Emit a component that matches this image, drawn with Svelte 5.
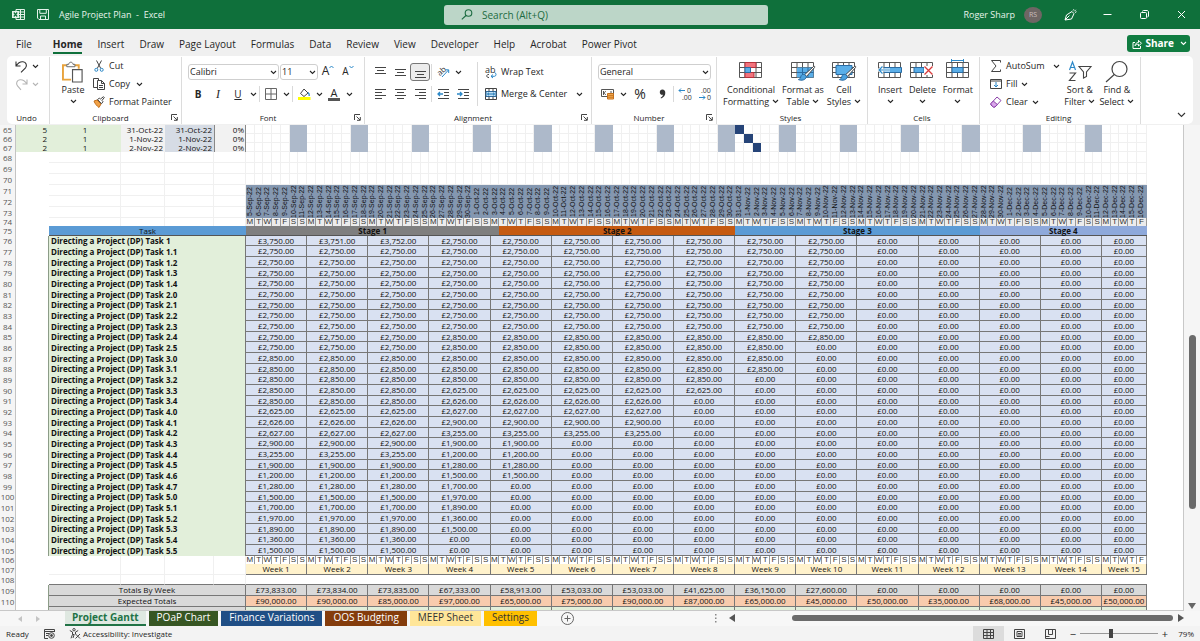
<script>
  const menu = ['File', 'Home', 'Insert', 'Draw', 'Page Layout', 'Formulas', 'Data', 'Review', 'View', 'Developer', 'Help', 'Acrobat', 'Power Pivot']

  const sheets = [
    { name: 'Project Gantt', cls: 'active' },
    { name: 'POaP Chart', cls: 'green' },
    { name: 'Finance Variations', cls: 'blue' },
    { name: 'OOS Budgting', cls: 'brown' },
    { name: 'MEEP Sheet', cls: 'cream' },
    { name: 'Settings', cls: 'gold' }
  ]

  // one column per day, 5 Sep to 16 Dec
  const start = Date.UTC(2022, 8, 5)
  const months = ['Jan', 'Feb', 'Mar', 'Apr', 'May', 'Jun', 'Jul', 'Aug', 'Sep', 'Oct', 'Nov', 'Dec']
  const days = Array.from({ length: 103 }, (_, i) => {
    const d = new Date(start + i * 86400000)
    return {
      label: `${d.getUTCDate()}-${months[d.getUTCMonth()]}-22`,
      letter: 'MTWTFSS'[i % 7],
      weekend: i % 7 > 4
    }
  })

  const weeks = Array.from({ length: 15 }, (_, i) => i + 1)
  const span = (i) => (i === 14 ? 5 : 7)

  const stages = [
    { name: 'Stage 1', days: 29, cls: 's1' },
    { name: 'Stage 2', days: 27, cls: 's2' },
    { name: 'Stage 3', days: 28, cls: 's3' },
    { name: 'Stage 4', days: 19, cls: 's4' }
  ]

  const top = [
    { row: 65, a: 5, b: 1, date: '31-Oct-22', on: 56 },
    { row: 66, a: 2, b: 1, date: '1-Nov-22', on: 57 },
    { row: 67, a: 2, b: 1, date: '2-Nov-22', on: 58 }
  ]

  // task, cost in weeks 1-3, cost from week 4, how many weeks from week 4
  const tasks = [
    ['1', 2750, 2750, 7],
    ['1.1', 2750, 2750, 7],
    ['1.2', 2750, 2750, 7],
    ['1.3', 2750, 2750, 7],
    ['1.4', 2750, 2750, 7],
    ['2.0', 2750, 2750, 7],
    ['2.1', 2750, 2750, 7],
    ['2.2', 2750, 2750, 7],
    ['2.3', 2750, 2750, 7],
    ['2.4', 2750, 2850, 7],
    ['2.5', 2750, 2850, 6],
    ['3.0', 2850, 2850, 6],
    ['3.1', 2850, 2850, 6],
    ['3.2', 2850, 2850, 5],
    ['3.3', 2850, 2625, 5],
    ['3.4', 2850, 2626, 4],
    ['4.0', 2625, 2627, 4],
    ['4.1', 2626, 2900, 4],
    ['4.2', 2627, 3255, 4],
    ['4.3', 2900, 1900, 2],
    ['4.4', 3255, 1200, 2],
    ['4.5', 1900, 1280, 2],
    ['4.6', 1200, 1500, 2],
    ['4.7', 1280, 1700, 1],
    ['5.0', 1500, 1970, 1],
    ['5.1', 1700, 1890, 1],
    ['5.2', 1970, 1360, 1],
    ['5.3', 1890, 1500, 1],
    ['5.4', 1360, 0, 0],
    ['5.5', 1500, 0, 0]
  ].map(([name, early, late, n], r) => ({
    row: 76 + r,
    name: `Directing a Project (DP) Task ${name}`,
    costs: weeks.map((w) => {
      if (r === 0 && w <= 3) return 3749 + w
      if (w <= 3) return early
      return w <= 3 + n ? late : 0
    })
  }))

  const totals = [73833, 73834, 73835, 67333, 58913, 53033, 53033, 41625, 36150, 27600, 0, 0, 0, 0, 0]
  const expected = [90000, 90000, 85000, 97000, 65000, 75000, 90000, 87000, 65000, 45000, 50000, 35000, 68000, 45000, 50000]
  const resources = [4, 5, 5, 4, 5, 4, 4, 5, 4, 4, '', '', '', '', '']

  const money = (n) => '£' + n.toLocaleString('en-GB', { minimumFractionDigits: 2 })

  let search = ''
  let zoom = 79
</script>

{#snippet chev()}
  <svg class="chev" width="7" height="5" viewBox="0 0 7 5"><path d="M1 1l2.5 2.4L6 1" fill="none" stroke="currentColor" stroke-width="1.1" /></svg>
{/snippet}

{#snippet lines(rows)}
  <svg width="13" height="13" viewBox="0 0 13 13" stroke="#444" stroke-width="1">
    {#each rows as [x1, x2, y]}<path d="M{x1} {y}H{x2}" />{/each}
  </svg>
{/snippet}

{#snippet launcher()}
  <button class="launch" aria-label="More options">
    <svg width="7" height="7" viewBox="0 0 7 7" fill="none" stroke="#444"><path d="M.5 6V.5H6M2.5 2.5l3.5 3.5M6.3 3v3.3H3" /></svg>
  </button>
{/snippet}

{#snippet gridIcon()}
  <path d="M.5 1.5h22v15H.5zM.5 6.5h22M.5 11.5h22M6 1.5v15M11.5 1.5v15M17 1.5v15" fill="#fff" stroke="#555" />
{/snippet}

{#snippet brush()}
  <path d="M22.5 5.500l-8.700 8 1.700 1.900 8-8.800c.8-.9-.2-1.800-1-1.100z" fill="#fff" stroke="#444" />
  <path d="M13.700 13.600c-2.200-.8-3.700.4-4 2.400-.2 1.500-1 2.200-2.300 2.600 3 1.300 7.300.6 8-2.900z" fill="#4da3e0" stroke="#2b6ca3" />
{/snippet}

{#snippet leftBlank()}
  <td class="grid"></td><td class="grid"></td><td class="grid"></td><td class="grid"></td>
{/snippet}

<div class="app">
  <header class="titlebar">
    <div class="doc">
      <svg width="13" height="11" viewBox="0 0 13 11"><path d="M4 .5h8.500v10H4zM4 3h8.500M4 5.500h8.500M4 8h8.500M8.500.5v10" fill="none" stroke="#e4f3ea" /><path d="M0 2h7v7H0z" fill="#e4f3ea" /><path d="M1.800 3.500l3.400 4M5.200 3.500l-3.400 4" stroke="#0f703b" stroke-width="1.200" /></svg>
      <svg width="12" height="11" viewBox="0 0 12 11" fill="none" stroke="#e4f3ea"><path d="M.5.5h11v10H2L.5 9zM2.800.5v3.800h6.500V.5M3.500 10.500V7h5v3.500" /></svg>
      <span>Agile Project Plan&nbsp; -&nbsp; Excel</span>
    </div>
    <label class="search">
      <svg width="12" height="11" viewBox="0 0 12 11" fill="none" stroke="#1c6b41" stroke-width="1.100"><circle cx="7.500" cy="4" r="3.300" /><path d="M5 6.500L.8 10.300" /></svg>
      <input type="text" placeholder="Search (Alt+Q)" aria-label="Search" bind:value={search} />
    </label>
    <div class="user">
      <span>Roger Sharp</span>
      <span class="avatar">RS</span>
      <button class="win" aria-label="Draw"><svg width="13" height="12" viewBox="0 0 13 12" fill="none" stroke="#fff"><path d="M1 11l1.500-5L8 2.500l2 2.200L7.500 10 1 11l4.500-4.500M9 1.500l.8-1.200M11 3.500l1.500-.8M10.300 2.300l1.500-1.500" /></svg></button>
      <button class="win" aria-label="Minimise"><svg width="9" height="9" viewBox="0 0 9 9"><path d="M.5 4.500h8" stroke="#fff" /></svg></button>
      <button class="win" aria-label="Restore"><svg width="9" height="9" viewBox="0 0 9 9" fill="none" stroke="#fff"><rect x=".5" y="2.500" width="6" height="6" rx="1" /><path d="M2.500 1.500c0-.6.400-1 1-1H7c.8 0 1.500.6 1.500 1.500V6c0 .5-.4 1-1 1" /></svg></button>
      <button class="win" aria-label="Close"><svg width="9" height="9" viewBox="0 0 9 9"><path d="M1 1l7 7M8 1L1 8" stroke="#fff" /></svg></button>
    </div>
  </header>

  <nav class="menu">
    {#each menu as item}
      <button class:current={item === 'Home'}>{item}</button>
    {/each}
    <button class="share">
      <svg width="10" height="10" viewBox="0 0 10 10" fill="none" stroke="#fff"><path d="M3 3.500H1v6h7.500V7M3 6.800c.3-2.300 1.700-3.300 3.500-3.300V1.300l3 3-3 2.700V5.200C5 5.200 4 5.600 3 6.800z" /></svg>
      Share {@render chev()}
    </button>
  </nav>

  <div class="ribbon">
    <section class="group undo">
      <div class="body col">
        <button class="small" aria-label="Undo"><svg width="13" height="13" viewBox="0 0 13 13" fill="none" stroke="#333" stroke-width="1.100"><path d="M1 1.500V6h4.500M1.200 5.800C3 3 5.500 1.500 8 1.800c3 .4 4.500 3.700 2.500 6L6 12.300" /></svg>{@render chev()}</button>
        <button class="small off" aria-label="Redo"><svg width="13" height="13" viewBox="0 0 13 13" fill="none" stroke="currentColor" stroke-width="1.100"><path d="M12 1.500V6H7.500M11.800 5.800C10 3 7.500 1.500 5 1.800 2 2.200.5 5.500 2.500 7.800l3.500 4" /></svg>{@render chev()}</button>
      </div>
      <footer><span>Undo</span></footer>
    </section>

    <section class="group clipboard">
      <div class="body">
        <button class="big">
          <svg width="24" height="22" viewBox="0 0 24 23" fill="none"><path d="M10 19.500H1.500V4.500h4M14 4.500h4V8" stroke="#e8a33d" stroke-width="2" /><path d="M5.500 6V3.500h2c.3-3 4.200-3 4.500 0h2V6z" stroke="#666" fill="#fff" /><path d="M11.500 9h10v13h-10z" stroke="#555" fill="#fff" stroke-width="1.200" /></svg>
          <span>Paste</span>{@render chev()}
        </button>
        <div class="col">
          <button class="small"><svg width="12" height="12" viewBox="0 0 12 12" fill="none"><path d="M3.500.5l4.300 8M8.500.5l-4.300 8" stroke="#444" /><circle cx="3.300" cy="9.800" r="1.500" stroke="#2b88c8" /><circle cx="8.700" cy="9.800" r="1.500" stroke="#2b88c8" /></svg>Cut</button>
          <button class="small"><svg width="12" height="12" viewBox="0 0 12 12" fill="#fff" stroke="#444"><path d="M4 9.500H.5v-9h5V2" /><path d="M4.500 2.500h4l3 3v6h-7zM8.500 2.500v3h3M6 7.500h4M6 9.500h4" /></svg>Copy&nbsp; {@render chev()}</button>
          <button class="small"><svg width="12" height="12" viewBox="0 0 12 12"><path d="M1 5l3-1 4 4-2 3.500C4 10 2 8 1 5z" fill="#f0a146" stroke="#c5701c" /><path d="M4.500 3.500l1.800-1.300L7.500 3 10.500.7l.8.8L9 4.500l1 1.200-1.500 2z" fill="#fff" stroke="#444" /></svg>Format Painter</button>
        </div>
      </div>
      <footer><span>Clipboard</span>{@render launcher()}</footer>
    </section>

    <section class="group font">
      <div class="body two">
        <div class="line">
          <label class="pick name"><select aria-label="Font"><option>Calibri</option></select>{@render chev()}</label>
          <label class="pick size"><select aria-label="Font size"><option>11</option></select>{@render chev()}</label>
          <button class="cell grow" aria-label="Increase font size"><span>A</span><svg width="5" height="4" viewBox="0 0 5 4"><path d="M.5 3l2-2 2 2" fill="none" stroke="#2b88c8" /></svg></button>
          <button class="cell grow shrink" aria-label="Decrease font size"><span>A</span><svg width="5" height="4" viewBox="0 0 5 4"><path d="M.5 1l2 2 2-2" fill="none" stroke="#2b88c8" /></svg></button>
        </div>
        <div class="line">
          <button class="cell"><b>B</b></button>
          <button class="cell"><i>I</i></button>
          <button class="cell"><u>U</u></button>
          <button class="drop" aria-label="Underline style">{@render chev()}</button>
          <span class="sep"></span>
          <button class="cell" aria-label="Borders"><svg width="12" height="12" viewBox="0 0 12 12" fill="none" stroke="#666"><path d="M.5.5h11v11H.5zM6 .5v11M.5 6h11" /></svg></button>
          <button class="drop" aria-label="Border style">{@render chev()}</button>
          <span class="sep"></span>
          <button class="cell" aria-label="Fill colour"><svg width="13" height="12" viewBox="0 0 13 12"><path d="M6 1l4 4-4 3.500L2.500 5.500z" fill="#fff" stroke="#444" /><path d="M10 4.500c1 .8 1.500 1.800 1.200 3.500" fill="none" stroke="#2b88c8" stroke-width="1.300" /><path d="M0 9h12.500v3H0z" fill="#ff0" /></svg></button>
          <button class="drop" aria-label="Fill options">{@render chev()}</button>
          <button class="cell acolor"><span>A</span></button>
          <button class="drop" aria-label="Font colour options">{@render chev()}</button>
        </div>
      </div>
      <footer><span>Font</span>{@render launcher()}</footer>
    </section>

    <section class="group align">
      <div class="body">
        <div class="two">
          <div class="line">
            <button class="cell" aria-label="Top align">{@render lines([[1, 12, 1.5], [3, 10, 4.5], [1, 12, 7.5]])}</button>
            <button class="cell" aria-label="Middle align">{@render lines([[1, 12, 3.5], [3, 10, 6.5], [1, 12, 9.5]])}</button>
            <button class="cell pressed" aria-label="Bottom align">{@render lines([[1, 12, 5.5], [3, 10, 8.5], [1, 12, 11.5]])}</button>
            <span class="sep"></span>
            <button class="cell" aria-label="Orientation"><svg width="14" height="12" viewBox="0 0 14 12"><text x="1" y="9" transform="rotate(-40 4 6)" font-size="8" font-family="Open Sans" fill="#333">ab</text><path d="M6 11l6.500-7M12.700 7V3.800H9.500" stroke="#2b88c8" fill="none" /></svg></button>
            <button class="drop" aria-label="Orientation options">{@render chev()}</button>
          </div>
          <div class="line">
            <button class="cell" aria-label="Align left">{@render lines([[1, 12, 1.5], [1, 8, 4.5], [1, 12, 7.5], [1, 8, 10.5]])}</button>
            <button class="cell" aria-label="Centre">{@render lines([[1, 12, 1.5], [3, 10, 4.5], [1, 12, 7.5], [3, 10, 10.5]])}</button>
            <button class="cell" aria-label="Align right">{@render lines([[1, 12, 1.5], [5, 12, 4.5], [1, 12, 7.5], [5, 12, 10.5]])}</button>
            <span class="sep"></span>
            <button class="cell" aria-label="Decrease indent"><svg width="13" height="12" viewBox="0 0 13 12"><path d="M1 1.500h11M7 4.500h5M7 7.500h5M1 10.500h11" stroke="#444" /><path d="M6 6H1M3 4L1 6l2 2" stroke="#2b88c8" fill="none" stroke-width="1.300" /></svg></button>
            <button class="cell" aria-label="Increase indent"><svg width="13" height="12" viewBox="0 0 13 12"><path d="M1 1.500h11M7 4.500h5M7 7.500h5M1 10.500h11" stroke="#444" /><path d="M0 6h5M3 4l2 2-2 2" stroke="#2b88c8" fill="none" stroke-width="1.300" /></svg></button>
          </div>
        </div>
        <span class="sep tall"></span>
        <div class="two">
          <button class="small"><svg width="12" height="13" viewBox="0 0 12 13"><text x="0" y="7" font-size="9" font-family="Open Sans" fill="#333">ab</text><path d="M9.500 6.500c2 .3 2 3.800 0 3.800H6M8 8.500l-2 1.800L8 12" stroke="#2b88c8" fill="none" /><path d="M4 8.500c-3-.5-3 3.300 0 3" stroke="#444" fill="none" /></svg>Wrap Text</button>
          <button class="small"><svg width="12" height="12" viewBox="0 0 12 12"><path d="M.5.5h11v11H.5z" fill="#fff" stroke="#444" /><path d="M1 3.500h10v5H1z" fill="#bfe0f5" stroke="#2b6ca3" /><path d="M4 .5v3M8 .5v3M4 8.500v3M8 8.500v3" stroke="#444" /><path d="M2.500 6h7M4 4.700L2.500 6 4 7.300M8 4.700L9.500 6 8 7.300" stroke="#1f78b8" fill="none" /></svg>Merge &amp; Center&nbsp;&nbsp; {@render chev()}</button>
        </div>
      </div>
      <footer><span>Alignment</span>{@render launcher()}</footer>
    </section>

    <section class="group number">
      <div class="body two">
        <label class="pick wide"><select aria-label="Number format"><option>General</option></select>{@render chev()}</label>
        <div class="line">
          <button class="cell" aria-label="Accounting format"><svg width="14" height="12" viewBox="0 0 14 12"><path d="M.5 1.500h12v7H.5z" fill="#fff" stroke="#555" /><path d="M5 3.500c-2-.5-2 3.500 0 3M2.500 3v4M10 3v2" stroke="#555" fill="none" /><path d="M6.500 5.500h6v5.500h-6z" fill="#f7b45a" stroke="#c5701c" /><path d="M6.500 7.300h6M6.500 9.200h6" stroke="#c5701c" /></svg></button>
          <button class="drop" aria-label="Accounting options">{@render chev()}</button>
          <button class="cell pct">%</button>
          <button class="cell" aria-label="Comma style"><svg width="7" height="10" viewBox="0 0 7 10"><path d="M3.300.5C5.300.5 6.300 2 6.300 4c0 2.500-1.500 4.500-4.300 5.500l-.4-.8C3.200 7.800 3.900 6.700 3.900 5.700 2 6.200.8 4.800.8 3.200.8 1.500 2 .5 3.300.5z" fill="#333" /></svg></button>
          <span class="sep"></span>
          <button class="cell" aria-label="Increase decimal"><svg width="14" height="14" viewBox="0 0 14 14" font-size="7" font-family="Open Sans" fill="#333"><text x="9" y="6">0</text><text x="4" y="13">.00</text><path d="M7 3.500H1M3 1.500l-2 2 2 2" stroke="#2b88c8" fill="none" /></svg></button>
          <button class="cell" aria-label="Decrease decimal"><svg width="14" height="14" viewBox="0 0 14 14" font-size="7" font-family="Open Sans" fill="#333"><text x="3" y="6">.00</text><text x="9" y="13">0</text><path d="M1 10.500h6M5 8.500l2 2-2 2" stroke="#2b88c8" fill="none" /></svg></button>
        </div>
      </div>
      <footer><span>Number</span>{@render launcher()}</footer>
    </section>

    <section class="group styles">
      <div class="body">
        <button class="big">
          <svg width="24" height="22" viewBox="0 0 24 22">{@render gridIcon()}<path d="M6 1.500h11v5H6zM6 11.500h9v5H6z" fill="#f2737d" stroke="#b5323c" /><path d="M6 6.500h5.500v5H6z" fill="#5aaee8" stroke="#2b6ca3" /></svg>
          <span>Conditional</span><span>Formatting {@render chev()}</span>
        </button>
        <button class="big">
          <svg width="24" height="22" viewBox="0 0 24 22">{@render gridIcon()}<path d="M6 6.500h16.500v10H6z" fill="#5aaee8" /><path d="M6 11.500h16.500M11.500 6.500v10M17 6.500v10" stroke="#2b6ca3" />{@render brush()}</svg>
          <span>Format as</span><span>Table {@render chev()}</span>
        </button>
        <button class="big">
          <svg width="24" height="22" viewBox="0 0 24 22">{@render gridIcon()}<path d="M4 4.500h16v9H4z" fill="#5aaee8" stroke="#2b6ca3" />{@render brush()}</svg>
          <span>Cell</span><span>Styles {@render chev()}</span>
        </button>
      </div>
      <footer><span>Styles</span></footer>
    </section>

    <section class="group cells">
      <div class="body">
        <button class="big">
          <svg width="24" height="22" viewBox="0 0 24 22">{@render gridIcon()}<path d="M6 6.500h17.500v5H6z" fill="#5aaee8" stroke="#2b6ca3" /><path d="M12 9H1M4.500 5.500L1 9l3.500 3.500" stroke="#fff" stroke-width="3" fill="none" /><path d="M12 9H1M4.500 5.500L1 9l3.500 3.500" stroke="#2b88c8" fill="none" stroke-width="1.200" /></svg>
          <span>Insert</span>{@render chev()}
        </button>
        <button class="big">
          <svg width="24" height="22" viewBox="0 0 24 22">{@render gridIcon()}<path d="M4 6.500h10v5H4z" fill="#5aaee8" stroke="#2b6ca3" /><path d="M14 5h9v9h-9z" fill="#fff" /><path d="M14.500 5.500l8 8M22.500 5.500l-8 8" stroke="#d83b3b" stroke-width="1.300" /></svg>
          <span>Delete</span>{@render chev()}
        </button>
        <button class="big">
          <svg width="24" height="22" viewBox="0 0 24 22">{@render gridIcon()}<path d="M6 6.500h11v5H6z" fill="#5aaee8" stroke="#2b6ca3" /><path d="M5-.5h13M5.500-2v3M17.500-2v3" stroke="#2b88c8" /></svg>
          <span>Format</span>{@render chev()}
        </button>
      </div>
      <footer><span>Cells</span></footer>
    </section>

    <section class="group editing">
      <div class="body">
        <div class="col">
          <button class="small"><svg width="12" height="12" viewBox="0 0 12 12" fill="none" stroke="#444"><path d="M10.500 2.500v-2h-9L6 6l-4.500 5.500h9v-2" /></svg>AutoSum&nbsp;&nbsp; {@render chev()}</button>
          <button class="small"><svg width="12" height="12" viewBox="0 0 12 12" fill="none"><path d="M.5 1.500h11v9H.5zM.5 3h11" stroke="#444" /><path d="M6 4v5M4 7l2 2 2-2" stroke="#2b88c8" /></svg>Fill {@render chev()}</button>
          <button class="small"><svg width="12" height="12" viewBox="0 0 12 12"><path d="M1 7.500L7 1l4 3.500-6 6.500H3.500L1 9z" fill="#fff" stroke="#8a3fa8" /><path d="M1 7.500L3.300 5l4 3.500L5 11H3.500L1 9z" fill="#d9a6ea" stroke="#8a3fa8" /></svg>Clear {@render chev()}</button>
        </div>
        <button class="big">
          <svg width="24" height="22" viewBox="0 0 24 22" fill="none"><path d="M1.500 9L4.500 1l3 8M2.500 6.500h4" stroke="#2b88c8" stroke-width="1.200" /><path d="M1.500 12h6l-6 7.500h6" stroke="#444" stroke-width="1.200" /><path d="M11 5.500h12L18.500 11v4.500l-3 1.500v-6z" stroke="#444" stroke-width="1.100" /></svg>
          <span>Sort &amp;</span><span>Filter {@render chev()}</span>
        </button>
        <button class="big">
          <svg width="24" height="22" viewBox="0 0 24 22" fill="none" stroke="#444" stroke-width="1.200"><circle cx="14.500" cy="8" r="7.500" /><path d="M9.300 13.500L1 21" /></svg>
          <span>Find &amp;</span><span>Select {@render chev()}</span>
        </button>
      </div>
      <footer><span>Editing</span></footer>
    </section>
    <button class="collapse" aria-label="Collapse ribbon"><svg width="9" height="6" viewBox="0 0 9 6"><path d="M1 1l3.500 3.500L8 1" fill="none" stroke="#333" stroke-width="1.100" /></svg></button>
  </div>

  <main class="sheet">
    <div class="view">
      <table>
        <colgroup>
          <col class="c-num" /><col class="c-a" /><col class="c-b" /><col class="c-c" /><col class="c-d" /><col class="c-e" />
          {#each days as d}<col />{/each}
          <col class="c-end" />
        </colgroup>
        <tbody>
          {#each top as t}
            <tr class="h9">
              <th>{t.row}</th>
              <td class="pale right">{t.a}</td>
              <td class="pale">{t.b}</td>
              <td class="light right">{t.date}</td>
              <td class="dim right">{t.date}</td>
              <td class="light right pc">0%</td>
              {#each days as d, i}<td class="grid" class:weekend={d.weekend} class:on={i === t.on}></td>{/each}
              <td></td>
            </tr>
          {/each}
          {#each [68, 69, 70] as n}
            <tr class="h11">
              <th>{n}</th><td></td>{@render leftBlank()}
              {#each days as d}<td class="grid"></td>{/each}
              <td></td>
            </tr>
          {/each}
          <tr class="h11">
            <th>71</th><td></td>{@render leftBlank()}
            {#each days as d}<td class="date" rowspan="3"><span>{d.label}</span></td>{/each}
            <td></td>
          </tr>
          <tr class="h11"><th>72</th><td></td>{@render leftBlank()}<td></td></tr>
          <tr class="h11"><th>73</th><td></td>{@render leftBlank()}<td></td></tr>
          <tr class="h8">
            <th>74</th><td></td>{@render leftBlank()}
            {#each days as d}<td class="day">{d.letter}</td>{/each}
            <td></td>
          </tr>
          <tr class="h10">
            <th>75</th><td></td>
            <td class="head s3" colspan="4">Task</td>
            {#each stages as s}<td class="head strong {s.cls}" colspan={s.days}>{s.name}</td>{/each}
            <td></td>
          </tr>
          {#each tasks as t, r}
            <tr class={r % 3 === 0 ? 'h10' : 'h11'}>
              <th>{t.row}</th><td class="edge"></td>
              <td class="task" colspan="4">{t.name}</td>
              {#each t.costs as c, i}<td class="cost" colspan={span(i)}>{money(c)}</td>{/each}
              <td></td>
            </tr>
          {/each}
          <tr class="h8">
            <th>106</th><td></td>{@render leftBlank()}
            {#each days as d}<td class="day low">{d.letter}</td>{/each}
            <td></td>
          </tr>
          <tr class="h11">
            <th>107</th><td></td>{@render leftBlank()}
            {#each weeks as w, i}<td class="cost week" colspan={span(i)}>Week {w}</td>{/each}
            <td></td>
          </tr>
          <tr class="h10 above">
            <th>108</th><td></td>{@render leftBlank()}
            <td colspan="103"></td><td></td>
          </tr>
          <tr class="h11">
            <th>109</th><td class="edge"></td>
            <td class="cost total" colspan="4">Totals By Week</td>
            {#each totals as c, i}<td class="cost total" colspan={span(i)}>{money(c)}</td>{/each}
            <td></td>
          </tr>
          <tr class="h11">
            <th>110</th><td class="edge"></td>
            <td class="cost total" colspan="4">Expected Totals</td>
            {#each expected as c, i}<td class="cost expect" colspan={span(i)}>{money(c)}</td>{/each}
            <td></td>
          </tr>
          <tr class="h11">
            <th>111</th><td class="edge"></td>
            <td class="cost total" colspan="4">Total Resources By Week</td>
            {#each resources as c, i}<td class="cost pale" colspan={span(i)}>{c}</td>{/each}
            <td></td>
          </tr>
        </tbody>
      </table>
    </div>
    <div class="vscroll">
      <span class="thumb"></span>
      <svg width="8" height="6" viewBox="0 0 8 6"><path d="M0 0h8L4 6z" fill="#666" /></svg>
    </div>
  </main>

  <div class="tabs">
    <span class="arrows">
      <svg width="5" height="6" viewBox="0 0 5 6"><path d="M4 0v6L0 3z" fill="#c4c4c4" /></svg>
      <svg width="5" height="6" viewBox="0 0 5 6"><path d="M0 0v6l4-3z" fill="#c4c4c4" /></svg>
    </span>
    {#each sheets as s}
      <button class="tab {s.cls}">{s.name}</button>
    {/each}
    <button class="add" aria-label="New sheet"><svg width="13" height="13" viewBox="0 0 13 13" fill="none" stroke="#666"><circle cx="6.500" cy="6.500" r="6" /><path d="M6.500 3.500v6M3.500 6.500h6" /></svg></button>
    <div class="hscroll">
      <svg width="16" height="12" viewBox="0 0 16 12" fill="#888"><path d="M7 2h1.500v1.500H7zM7 5.500h1.500V7H7zM7 9h1.500v1.500H7z" /></svg>
      <svg width="6" height="8" viewBox="0 0 6 8"><path d="M6 0v8L0 4z" fill="#555" /></svg>
      <span class="track"><span class="bar"></span></span>
      <svg width="6" height="8" viewBox="0 0 6 8"><path d="M0 0v8l6-4z" fill="#555" /></svg>
    </div>
  </div>

  <footer class="status">
    <span class="ready">Ready</span>
    <svg width="12" height="10" viewBox="0 0 12 10" fill="none" stroke="#444"><path d="M4 9.500H.5v-9h10V3M.5 2.500h10M2 4.500h3M2 6.500h2" /><circle cx="7.500" cy="6.500" r="2.800" /><circle cx="7.500" cy="6.500" r="1" fill="#444" /></svg>
    <button class="access"><svg width="12" height="11" viewBox="0 0 12 11" fill="none" stroke="#444"><circle cx="5" cy="1.700" r="1.200" /><path d="M.8 2.500L3.500 4v2.500L2 10.300M9.200 2.500L6.500 4v2M3.500 6.500h1.700L4 10M6.500 6l4.500 4.500M11 6l-4.500 4.500" /></svg>Accessibility: Investigate</button>
    <button class="mode sel first" aria-label="Normal view"><svg width="11" height="10" viewBox="0 0 11 10" fill="none" stroke="#444"><path d="M.5.5h10v9H.5zM.5 3.500h10M.5 6.500h10M4 .5v9M7.500.5v9" /></svg></button>
    <button class="mode" aria-label="Page layout view"><svg width="11" height="10" viewBox="0 0 11 10" fill="none" stroke="#444"><path d="M.5.5h10v9H.5zM3 2.500h5v5H3zM4 4.500h3M4 6h3" /></svg></button>
    <button class="mode" aria-label="Page break view"><svg width="11" height="10" viewBox="0 0 11 10" fill="none" stroke="#444"><path d="M.5.5h10v9H.5zM3.500.5v5h4v-5M.5 7.500h4" /></svg></button>
    <span class="sign">−</span>
    <input type="range" min="10" max="187" aria-label="Zoom" bind:value={zoom} />
    <span class="sign">+</span>
    <span class="pct-text">{zoom}%</span>
  </footer>
</div>

<style>
:global(body) {
    margin: 0;
    background: #f3f3f3;
}

.app {
    display: flex;
    flex-direction: column;
    height: 100vh;
    overflow: hidden;
    font-family: "Open Sans", "Noto Sans", sans-serif;
    font-size: 9px;
    line-height: 12px;
    color: #262626;
    background: #f0f0f0;
}

button, input, select {
    font: inherit;
    color: inherit;
    background: none;
    border: 0;
    padding: 0;
    margin: 0;
}

svg {
    display: block;
    flex: none;
    overflow: visible;
}

.titlebar {
    display: grid;
    grid-template-columns: 37% 27% 36%;
    align-items: center;
    height: 29px;
    flex: none;
    background: #0f703b;
    color: #e8f4ec;
}

.doc {
    display: flex;
    align-items: center;
    gap: 12px;
    padding-left: 12px;
}

.doc span {
    margin-left: -2px;
}

.search {
    display: flex;
    align-items: center;
    gap: 9px;
    height: 20px;
    padding-left: 17px;
    border-radius: 3px;
    background: #bcd6c8;
}

.search input {
    flex: 1;
    min-width: 0;
    outline: 0;
    font-size: 10px;
}

.search input::placeholder {
    color: #1c6b41;
    opacity: 1;
}

.user {
    display: flex;
    align-items: center;
    justify-content: flex-end;
}

.avatar {
    width: 18px;
    height: 16px;
    margin: 0 10px 0 9px;
    border-radius: 50%;
    background: #6e6664;
    color: #c9bfbc;
    font-size: 7px;
    line-height: 16px;
    text-align: center;
}

.win {
    display: flex;
    justify-content: center;
    width: 37px;
}

.menu {
    display: flex;
    align-items: center;
    gap: 15px;
    height: 27px;
    flex: none;
    padding: 5px 10px 0 16px;
    box-sizing: border-box;
    font-size: 10px;
}

.menu button {
    padding: 0;
    line-height: 15px;
    border-bottom: 2px solid transparent;
}

.menu button:first-child {
    margin-right: 6px;
}

.menu .current {
    font-weight: 700;
    border-color: #0f703b;
}

.menu .share {
    display: flex;
    align-items: center;
    gap: 3px;
    height: 17px;
    margin-left: auto;
    margin-bottom: 3px;
    padding: 0 3px 0 5px;
    border: 0;
    border-radius: 3px;
    background: #107c41;
    color: #fff;
    font-weight: 700;
}

.share .chev {
    margin-left: 3px;
}

.ribbon {
    display: flex;
    flex: none;
    height: 68px;
    margin: 0 7px 1px;
    border-radius: 5px;
    background: #fff;
}

.group {
    display: flex;
    flex-direction: column;
    flex: none;
    box-sizing: border-box;
    margin-top: 1px;
    border-right: 1px solid #dcdcdc;
}

.group.undo { width: 43px; }
.group.clipboard { width: 132px; }
.group.font { width: 183px; }
.group.align { width: 227px; }
.group.number { width: 125px; }
.group.styles { width: 151px; }
.group.cells { width: 112px; }
.group.editing { width: 161px; }

.body {
    display: flex;
    height: 54px;
}

.col {
    display: flex;
    flex-direction: column;
}

.col .small {
    height: 18px;
}

.two {
    display: flex;
    flex-direction: column;
    gap: 2px;
    padding-top: 5px;
    box-sizing: border-box;
}

.two .small {
    height: 20px;
}

.line {
    display: flex;
    align-items: center;
    height: 20px;
}

.small {
    display: flex;
    align-items: center;
    gap: 4px;
    white-space: nowrap;
}

.undo .body {
    padding-left: 8px;
}

.off {
    color: #b5b5b5;
}

.big {
    display: flex;
    flex-direction: column;
    align-items: center;
    white-space: nowrap;
    line-height: 12px;
    padding-top: 4px;
}

.big svg:first-child {
    margin-bottom: 1px;
}

.big > .chev {
    margin-top: 3px;
}

.big span {
    display: flex;
    align-items: center;
    gap: 3px;
}

.clipboard .big {
    width: 43px;
    padding-left: 3px;
}

.group footer {
    display: flex;
    align-items: center;
    height: 13px;
    padding-right: 3px;
    font-size: 8px;
}

.group footer span {
    flex: 1;
    text-align: center;
}

.launch {
    width: 7px;
}

.font .body, .number .body {
    padding-left: 6px;
}

.align .two:first-child {
    padding-left: 5px;
}

.pick {
    position: relative;
    display: block;
    height: 16px;
    box-sizing: border-box;
    border: 1px solid #cfcfcf;
    border-radius: 3px;
}

.pick select {
    display: block;
    width: 100%;
    height: 14px;
    padding-left: 1px;
    appearance: none;
}

.pick .chev {
    position: absolute;
    right: 1px;
    top: 5px;
}

.pick.name { width: 91px; }
.pick.size { width: 38px; margin-left: 1px; }
.pick.wide { width: 113px; margin: 2px 0; }

.cell {
    display: flex;
    align-items: center;
    justify-content: center;
    width: 20px;
    height: 18px;
    font-size: 10px;
}

.cell.grow {
    align-items: flex-start;
    font-size: 12px;
    line-height: 16px;
}

.grow svg {
    margin-top: 2px;
}

.cell.shrink {
    font-size: 10px;
}

.cell i {
    font-family: "Liberation Serif", serif;
    font-size: 12px;
}

.cell.pressed {
    box-sizing: border-box;
    border: 1px solid #777;
    border-radius: 3px;
    background: #ececec;
}

.cell.pct {
    width: 24px;
    font-size: 14px;
}

.acolor span {
    width: 12px;
    line-height: 10px;
    border-bottom: 3px solid #555;
    font-size: 11px;
}

.drop {
    display: flex;
    justify-content: center;
    width: 10px;
}

.sep {
    width: 1px;
    height: 16px;
    background: #d9d9d9;
    margin: 0 1px;
}

.sep.tall {
    height: 44px;
    margin: 5px 7px 0 4px;
}

.styles .body { justify-content: space-between; padding: 0 6px; }
.cells .body { justify-content: space-between; padding: 0 6px 0 10px; }
.editing .body { gap: 4px; padding-left: 10px; }

.collapse {
    margin: auto 7px 6px auto;
}

.sheet {
    display: flex;
    flex: 1;
    min-height: 0;
}

.view {
    flex: 1;
    overflow: hidden;
    box-sizing: border-box;
    border-right: 1px solid #c8c8c8;
    border-bottom: 1px solid #c8c8c8;
    background: #fff;
}

table {
    width: 100%;
    table-layout: fixed;
    border-spacing: 0;
    font-size: 8px;
    line-height: 8px;
    color: #111;
}

.c-num { width: 16px; }
.c-a { width: 33px; }
.c-b { width: 72px; }
.c-c { width: 44px; }
.c-d { width: 49px; }
.c-e { width: 32px; }
.c-end { width: 36px; }

th, td {
    padding: 0;
    box-sizing: border-box;
    text-align: center;
    white-space: nowrap;
}

th {
    font-weight: 400;
    color: #555;
    background: #f5f5f5;
    border-right: 1px solid #c4c4c4;
}

.h8 { height: 8px; }
.h9 { height: 9px; }
.h10 { height: 10px; }
.h11 { height: 11px; }

.grid {
    border-right: 1px solid #f0f0f0;
    border-bottom: 1px solid #f0f0f0;
}

.h8 .grid {
    border-bottom: 0;
}

.right {
    text-align: right;
    padding-right: 2px;
}

.pale { background: #e2efda; }
.light { background: #f2f2f2; }
.dim { background: #d6dce5; }
.pc { border-right: 1px solid #888; border-left: 1px solid #888; padding-right: 1px; }
.weekend { background: #adb9ca; border-color: #adb9ca; }
.on { background: #264478; border-color: #264478; }

.date {
    background: #8497b0;
    font-family: "Liberation Sans", Arial, sans-serif;
    font-size: 7px;
}

.date span {
    display: block;
    writing-mode: vertical-rl;
    transform: rotate(180deg);
    width: 8px;
    height: 33px;
    line-height: 8px;
}

.day {
    background: #ececec;
    border-right: 1px solid #999;
    font-family: "Liberation Sans", Arial, sans-serif;
    color: #333;
}

.day.low {
    background: #fff;
}

.head {
    border-bottom: 1px solid #555;
}

.strong { font-weight: 700; }
.s1 { background: #7f7f7f; }
.s2 { background: #c55a11; }
.s3 { background: #5b9bd5; }
.s4 { background: #8ea9db; }

.edge {
    border-right: 1px solid #8c9c88;
}

.task {
    padding-left: 2px;
    text-align: left;
    font-weight: 700;
    background: #e2efda;
    border-right: 1px solid #777;
}

.cost {
    background: #d9e1f2;
    border-right: 1px solid #777;
    border-bottom: 1px solid #777;
}

.cost.week { background: #fff2cc; }
.cost.total { background: #d9d9d9; }
.cost.expect { background: #f8cbad; }
.cost.pale { background: #e2efda; }

.above td {
    border-bottom: 1px solid #777;
}

.above td:nth-child(2), .above td:last-child {
    border-bottom: 0;
}

.vscroll {
    display: flex;
    flex-direction: column;
    align-items: center;
    width: 16px;
    padding-bottom: 2px;
    background: #f5f5f5;
}

.thumb {
    width: 7px;
    height: 36%;
    margin: auto 0 94px;
    border-radius: 4px;
    background: #6b6b6b;
}

.tabs {
    display: flex;
    align-items: center;
    height: 15px;
    flex: none;
    background: #f7f7f7;
    font-size: 10px;
}

.arrows {
    display: flex;
    gap: 13px;
    width: 47px;
    padding-left: 18px;
}

.tab {
    display: flex;
    height: 15px;
    box-sizing: border-box;
    padding: 0 8px;
    margin-right: 3px;
    color: #fff;
    line-height: 12px;
    white-space: nowrap;
}

.tab.active {
    padding: 0 7px;
    font-weight: 700;
    color: #217346;
    background: #dfe8e1;
    border-bottom: 2px solid #217346;
}

.tab.green { background: #375623; }
.tab.blue { background: #1f4e85; }
.tab.brown { background: #843c0c; }
.tab.cream { background: #ffe699; color: #333; }
.tab.gold { background: #ffc000; color: #333; }

.add {
    margin-left: 21px;
}

.hscroll {
    display: flex;
    align-items: center;
    gap: 5px;
    width: 41%;
    margin-left: auto;
    padding-right: 16px;
    box-sizing: border-box;
    padding-bottom: 1px;
}

.track {
    display: flex;
    flex: 1;
    justify-content: flex-end;
}

.bar {
    width: 88%;
    height: 6px;
    border-radius: 3px;
    background: #6b6b6b;
}

.status {
    display: flex;
    align-items: center;
    height: 15px;
    flex: none;
    padding: 0 6px;
    background: #f3f3f3;
    font-size: 8px;
}

.ready {
    width: 38px;
}

.access {
    display: flex;
    align-items: center;
    gap: 2px;
    margin-left: 13px;
}

.mode {
    display: flex;
    align-items: center;
    justify-content: center;
    width: 31px;
    height: 15px;
}

.mode.first {
    margin-left: auto;
}

.mode.sel {
    background: #dcdcdc;
}

.sign {
    width: 14px;
    font-size: 11px;
    text-align: center;
}

.status input {
    width: 78px;
    height: 12px;
    appearance: none;
    background: linear-gradient(#999, #999) center / 100% 1px no-repeat;
}

.status input::-webkit-slider-thumb {
    appearance: none;
    width: 4px;
    height: 9px;
    background: #444;
}

.pct-text {
    width: 22px;
    text-align: right;
}
</style>
